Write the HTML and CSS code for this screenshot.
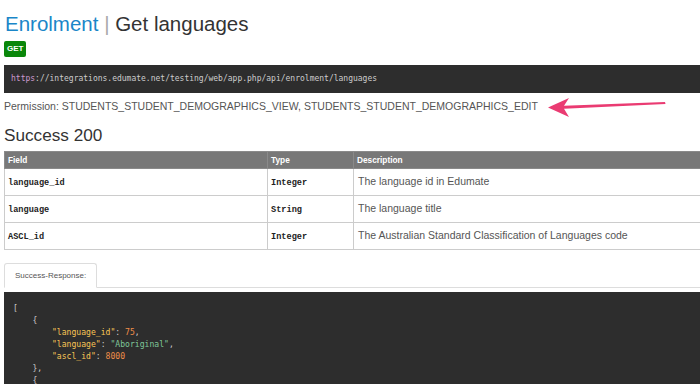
FILE: index.html
```html
<!DOCTYPE html>
<html lang="en">
<head>
	<meta charset="UTF-8">
	<title>Enrolment - Get languages</title>
	<meta name="viewport" content="width=device-width">
	<link rel="stylesheet" href="styles.css">
</head>
<body>
	<div class="article">
		<h1><span class="group">Enrolment</span> <span class="sep">|</span> Get languages</h1>
		<span class="method">GET</span>

		<pre class="url"><span class="proto">https</span>://integrations.edumate.net/testing/web/app.php/api/enrolment/languages</pre>

		<p class="permission">
			Permission: STUDENTS_STUDENT_DEMOGRAPHICS_VIEW, STUDENTS_STUDENT_DEMOGRAPHICS_EDIT
			<svg class="arrow" width="140" height="30" viewBox="0 0 140 30">
				<path d="M8 15.5 L29 6 L24 13.8 L125 10 L125.5 12 L24 16.8 L29 25 Z" fill="#ea3b72"/>
			</svg>
		</p>

		<h2>Success 200</h2>
		<table class="fields">
			<colgroup>
				<col class="col-field">
				<col class="col-type">
				<col>
			</colgroup>
			<thead>
				<tr>
					<th>Field</th>
					<th>Type</th>
					<th>Description</th>
				</tr>
			</thead>
			<tbody>
				<tr>
					<td class="code">language_id</td>
					<td class="code">Integer</td>
					<td>The language id in Edumate</td>
				</tr>
				<tr>
					<td class="code">language</td>
					<td class="code">String</td>
					<td>The language title</td>
				</tr>
				<tr>
					<td class="code">ASCL_id</td>
					<td class="code">Integer</td>
					<td>The Australian Standard Classification of Languages code</td>
				</tr>
			</tbody>
		</table>

		<ul class="tabs">
			<li class="active">Success-Response:</li>
		</ul>
<pre class="json"><span class="p">[</span>
    <span class="p">{</span>
        <span class="k">"language_id"</span><span class="p">:</span> <span class="n">75</span><span class="p">,</span>
        <span class="k">"language"</span><span class="p">:</span> <span class="s">"Aboriginal"</span><span class="p">,</span>
        <span class="k">"ascl_id"</span><span class="p">:</span> <span class="n">8000</span>
    <span class="p">},</span>
    <span class="p">{</span></pre>
	</div>
</body>
</html>
```

FILE: styles.css
```css
* {
	padding: 0;
	margin: 0;
	box-sizing: border-box;
}

html, body {
	overflow: hidden;
}

body {
	font-family: "Liberation Sans", Arial, sans-serif;
	color: #333;
	background: #fff;
}

.article {
	width: 760px;
	padding-left: 4px;
}

h1 {
	font-size: 20.5px;
	line-height: 24px;
	font-weight: normal;
	margin-top: 12px;
	padding-left: 1px;
}

h1 .group {
	color: #1a86c8;
}

h1 .sep {
	color: #aaa;
	font-weight: 300;
}

.method {
	display: block;
	width: fit-content;
	height: 16px;
	line-height: 16px;
	margin-top: 5px;
	padding: 0 3px;
	border-radius: 2px;
	background: #0a870a;
	color: #fff;
	font-size: 8px;
	font-weight: bold;
}

pre {
	font-family: "DejaVu Sans Mono", monospace;
	background: #2d2d2d;
	color: #ccc;
	font-size: 8px;
}

.url {
	margin-top: 8px;
	padding: 8px 7px;
	line-height: 12px;
}

.url .proto {
	color: #cc99cd;
}

.permission {
	position: relative;
	margin-top: 7px;
	font-size: 10.5px;
	line-height: 13px;
	color: #555;
}

.arrow {
	position: absolute;
	left: 536px;
	top: -8px;
}

h2 {
	font-size: 17.2px;
	line-height: 21px;
	font-weight: normal;
	margin: 12px 0 5px;
}

.fields {
	width: 100%;
	table-layout: fixed;
	border-collapse: collapse;
	border: 1px solid #ccc;
}

.col-field {
	width: 263px;
}

.col-type {
	width: 86px;
}

.fields th {
	background: #787878;
	color: #fff;
	font-size: 8.3px;
	text-align: left;
	line-height: 11px;
	padding: 3px 3px 2px;
	border: 1px solid #8a8a8a;
}

.fields td {
	vertical-align: top;
	font-size: 10.5px;
	line-height: 14px;
	color: #555;
	padding: 5px 4px 7px;
	border: 1px solid #ccc;
	border-top-color: #ddd;
}

.fields td.code {
	font-family: "Liberation Mono", "Courier New", monospace;
	font-weight: bold;
	font-size: 8.6px;
	line-height: 12px;
	color: #222;
	padding: 8px 3px 6px;
}

.tabs {
	list-style: none;
	margin-top: 13px;
	border-bottom: 1px solid #ddd;
	display: flex;
}

.tabs li {
	font-size: 8px;
	line-height: 12px;
	color: #555;
	padding: 6px 10px 5px;
	border: 1px solid #ddd;
	border-bottom-color: #fff;
	border-radius: 3px 3px 0 0;
	margin-bottom: -1px;
	background: #fff;
}

.json {
	margin-top: 4px;
	padding: 10px 9px;
	font-size: 8.1px;
	line-height: 12px;
}

.json .p {
	color: #ccc;
}

.json .k {
	color: #f8c555;
}

.json .s {
	color: #7ec699;
}

.json .n {
	color: #f08d49;
}
```
